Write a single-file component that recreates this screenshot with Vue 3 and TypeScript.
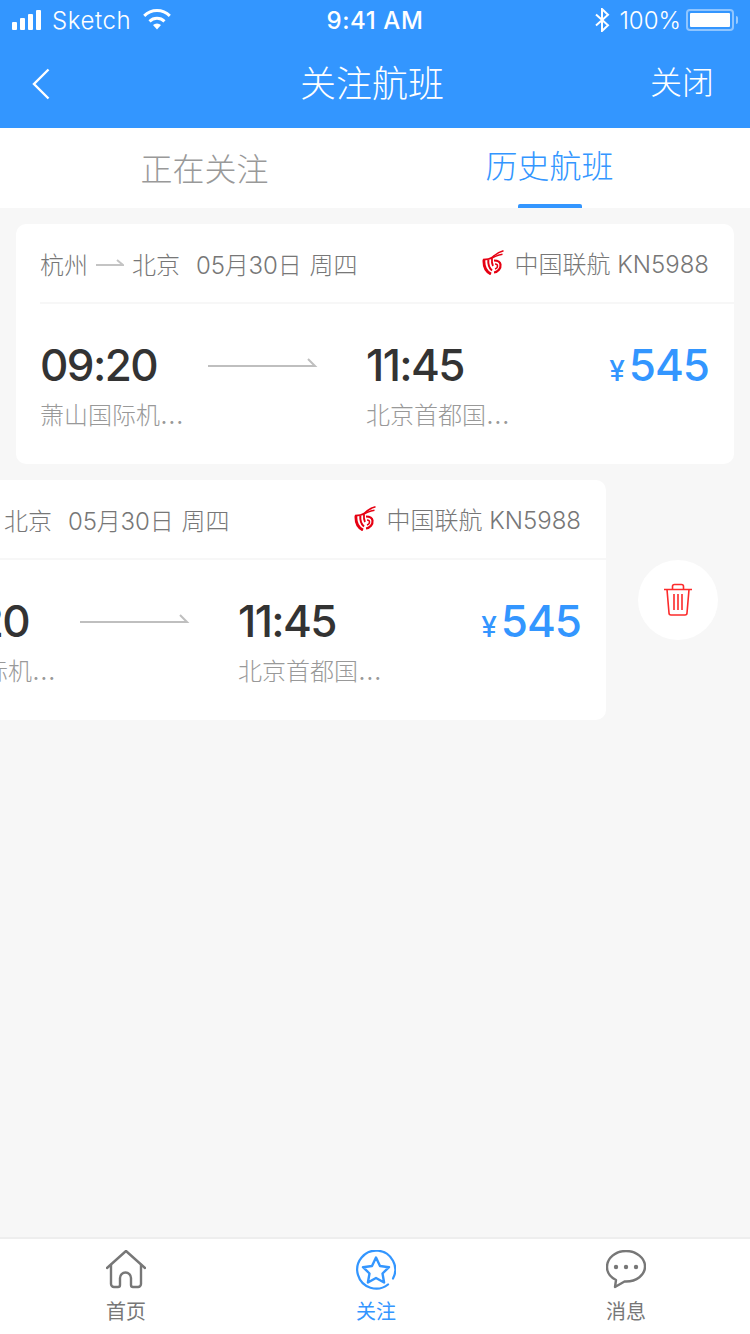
<template>
  <div class="page">
    <header class="top">
      <div class="status">
        <div class="status-side">
          <span class="signal"><i v-for="h in [8, 12, 16, 20]" :key="h" :style="{ height: h + 'px' }"></i></span>
          <span class="carrier sketch">Sketch</span>
          <svg class="wifi" width="30" height="22" viewBox="0 0 30 22">
            <path d="M15 20.5l-4-4.4a5.6 5.6 0 0 1 8 0z" fill="#fff" />
            <path d="M7.5 12.3a10.8 10.8 0 0 1 15 0M2.2 6.8a18.4 18.4 0 0 1 25.6 0" fill="none" stroke="#fff" stroke-width="3" />
          </svg>
        </div>
        <span class="clock">9:41 AM</span>
        <div class="status-side right">
          <svg width="16" height="24" viewBox="0 0 16 24">
            <path d="M2 6.5l12 10.8L8 23V1l6 5.8L2 17.5" fill="none" stroke="#fff" stroke-width="2" />
          </svg>
          <span class="carrier">100%</span>
          <span class="battery"><b></b></span>
          <span class="nub"></span>
        </div>
      </div>
      <nav class="navbar">
        <svg class="back" width="18" height="32" viewBox="0 0 18 32">
          <path d="M16.5 1.5L2 16l14.500 14.500" fill="none" stroke="#fff" stroke-width="2.400" />
        </svg>
        <h1>关注航班</h1>
        <span class="close">关闭</span>
      </nav>
    </header>

    <div class="tabs">
      <div class="tab">正在关注</div>
      <div class="tab active">历史航班</div>
    </div>

    <main class="list">
      <div v-for="(row, i) in rows" :key="i" class="row" :class="{ swiped: row.swiped }">
        <article class="card">
          <div class="card-head">
            <div class="route">
              <span>杭州</span>
              <svg width="28" height="10" viewBox="0 0 28 10">
                <path d="M0 7h27l-6-5" fill="none" stroke="#c4c4c4" stroke-width="2" />
              </svg>
              <span>北京</span>
              <span class="date">05月30日</span>
              <span>周四</span>
            </div>
            <div class="airline">
              <svg class="logo" width="22" height="25" viewBox="0 0 22 25">
                <g fill="none" stroke="#e60012">
                  <path d="M2 9.500C1.500 16 3.500 21.500 9 24" stroke-width="2.800" />
                  <path d="M6.300 9.500C6 14 7 18 10 20.500" stroke-width="2" />
                  <path d="M10 8.500C9.700 11 10 14 11 16" stroke-width="1.800" />
                  <path d="M1 9.500C5 9.500 8 9 10 7.500 13 4.500 17 2 21.500 .8" stroke-width="1.600" />
                  <path d="M9 9C12 6.500 16 5 20.500 4.200" stroke-width="1.400" />
                  <path d="M12 10.500c3 0 6 .5 6.500 4 .5 4-2.500 7.500-6.500 8" stroke-width="2.200" />
                  <path d="M13 14c1.500 0 2.500 .7 2.500 2 0 1.500-1 2.500-2.500 3" stroke-width="1.500" />
                </g>
              </svg>
              <span>中国联航 KN5988</span>
            </div>
          </div>
          <div class="card-body">
            <div class="stop">
              <div class="time">09:20</div>
              <div class="airport">萧山国际机<span class="dots">…</span></div>
            </div>
            <svg class="arrow" width="110" height="12" viewBox="0 0 110 12">
              <path d="M0 9h107l-7-7" fill="none" stroke="#bfbfbf" stroke-width="2" />
            </svg>
            <div class="stop">
              <div class="time">11:45</div>
              <div class="airport">北京首都国<span class="dots">…</span></div>
            </div>
            <div class="price"><small>¥</small>545</div>
          </div>
        </article>
        <button v-if="row.swiped" class="delete" type="button" aria-label="删除">
          <svg width="30" height="34" viewBox="0 0 30 34" fill="none" stroke="#fc2b2b" stroke-width="1.600">
            <path d="M1 6.500h28M9.500 6.500V3.500a2 2 0 0 1 2-2h7a2 2 0 0 1 2 2v3" />
            <path d="M4 6.500l2 23.500a2 2 0 0 0 2 2h14a2 2 0 0 0 2-2l2-23.500" />
            <path d="M11 11v16M15 11v16M19 11v16" />
          </svg>
        </button>
      </div>
    </main>

    <footer class="tabbar">
      <div class="tabbar-item">
        <svg width="40" height="40" viewBox="0 0 40 40" fill="none" stroke="#777" stroke-width="2.400" stroke-linejoin="round" stroke-linecap="round">
          <path d="M1 18L20 1l19 17" />
          <path d="M5 15v19a3 3 0 0 0 3 3h4a2 2 0 0 0 2-2v-7a5.500 5.500 0 0 1 11 0v7a2 2 0 0 0 2 2h5a3 3 0 0 0 3-3V15" />
        </svg>
        <span>首页</span>
      </div>
      <div class="tabbar-item on">
        <svg width="40" height="40" viewBox="0 0 40 40" fill="none" stroke="#3396ff" stroke-width="2.200" stroke-linejoin="round">
          <path d="M32 34.500A19 19 0 1 1 37 28.500" stroke-linecap="round" />
          <path d="M20 7.500l4 8.500 9 1.200-6.500 6.300 1.600 9L20 28l-8.100 4.500 1.600-9L7 17.200l9-1.200z" stroke-width="2.400" />
        </svg>
        <span>关注</span>
      </div>
      <div class="tabbar-item">
        <svg width="40" height="40" viewBox="0 0 40 40" fill="none" stroke="#777" stroke-width="2.400" stroke-linejoin="round">
          <path d="M20 1C9.500 1 1 8 1 17c0 5.500 3 10 9 13l-1 7 9.500-5.500H20c10.500 0 19-6.500 19-15S30.500 1 20 1z" />
          <circle cx="10" cy="17" r="2.200" fill="#777" stroke="none" />
          <circle cx="20" cy="17" r="2.200" fill="#777" stroke="none" />
          <circle cx="30" cy="17" r="2.200" fill="#777" stroke="none" />
        </svg>
        <span>消息</span>
      </div>
    </footer>
  </div>
</template>

<script setup lang="ts">
const rows = [{ swiped: false }, { swiped: true }]
</script>

<style>
html,
body {
  margin: 0;
  background: #f7f7f7;
}
</style>

<style scoped>
.page {
  width: 750px;
  height: 1334px;
  display: flex;
  flex-direction: column;
  overflow: hidden;
  background: #f7f7f7;
  font-family: Inter, "Noto Sans CJK SC", sans-serif;
}

.top {
  height: 128px;
  background: #3396ff;
  color: #fff;
}

.status {
  height: 40px;
  display: flex;
  align-items: center;
  justify-content: space-between;
  padding: 0 12px;
}

.status-side {
  width: 200px;
  display: flex;
  align-items: center;
  gap: 9px;
}

.status-side.right {
  justify-content: flex-end;
  gap: 9px;
}

.signal {
  display: flex;
  align-items: flex-end;
  gap: 3px;
  margin-right: 2px;
}

.signal i {
  width: 5px;
  border-radius: 1px;
  background: #fff;
}

.carrier {
  font-size: 24px;
  font-weight: 300;
}

.sketch {
  letter-spacing: 0.6px;
}

.wifi {
  margin-left: 2px;
}

.clock {
  font-size: 24px;
  font-weight: 500;
  letter-spacing: 0.6px;
}

.battery {
  width: 48px;
  height: 22px;
  box-sizing: border-box;
  border: 2px solid rgba(255, 255, 255, 0.45);
  border-radius: 4px;
  padding: 2px;
  margin: 0 -7px 0 -4px;
}

.battery b {
  display: block;
  height: 100%;
  border-radius: 1px;
  background: #fff;
}

.nub {
  width: 2px;
  height: 8px;
  border-radius: 0 2px 2px 0;
  background: rgba(255, 255, 255, 0.5);
}

.navbar {
  height: 88px;
  display: flex;
  align-items: center;
  justify-content: space-between;
  padding: 0 36px 0 32px;
  position: relative;
}

.navbar h1 {
  position: absolute;
  left: 0;
  right: 6px;
  top: 0;
  margin: 0;
  line-height: 88px;
  font-size: 36px;
  font-weight: 300;
  text-align: center;
}

.close {
  font-size: 32px;
  font-weight: 300;
  margin-top: -8px;
}

.tabs {
  height: 80px;
  display: grid;
  grid-template-columns: 345px 345px;
  grid-template-rows: 80px;
  padding-left: 32px;
  background: #fff;
}

.tab {
  text-align: center;
  font-size: 32px;
  font-weight: 300;
  line-height: 84px;
  color: #999;
  position: relative;
}

.tab.active {
  color: #3396ff;
  line-height: 78px;
}

.tab.active::after {
  content: "";
  position: absolute;
  left: 141px;
  bottom: 0;
  width: 64px;
  height: 4px;
  border-radius: 2px 2px 0 0;
  background: #3396ff;
}

.list {
  flex: 1;
  padding: 16px 0 0 16px;
  display: flex;
  flex-direction: column;
  gap: 16px;
}

.row {
  display: flex;
  align-items: center;
  gap: 32px;
}

.row.swiped {
  margin-left: -128px;
}

.card {
  flex: none;
  width: 718px;
  height: 240px;
  border-radius: 10px;
  background: #fff;
}

.card-head {
  height: 78px;
  margin-left: 24px;
  padding-right: 25px;
  border-bottom: 2px solid #f7f7f7;
  display: flex;
  align-items: center;
  justify-content: space-between;
  font-size: 24px;
  font-weight: 300;
  color: #777;
}

.route {
  display: flex;
  align-items: center;
  gap: 8px;
}

.date {
  margin-left: 8px;
  letter-spacing: -0.15px;
}

.airline {
  display: flex;
  align-items: center;
  gap: 10px;
  margin-top: -2px;
}

.card-body {
  display: flex;
  padding: 35px 25px 0 24px;
  height: 160px;
  box-sizing: border-box;
}

.stop {
  width: 168px;
}

.time {
  font-size: 44px;
  line-height: 52px;
  font-weight: 500;
  color: #333;
  letter-spacing: -1.6px;
}

.airport {
  margin-top: 8px;
  height: 34px;
  font-size: 24px;
  line-height: 34px;
  font-weight: 300;
  color: #999;
}

.dots {
  font-size: 28px;
  line-height: 0;
}

.arrow {
  flex: none;
  margin: 18px 48px 0 0;
}

.price {
  margin-left: auto;
  font-size: 44px;
  line-height: 52px;
  font-weight: 500;
  letter-spacing: -1px;
  color: #3396ff;
}

.price small {
  font-size: 28px;
  margin-right: 5px;
}

.delete {
  flex: none;
  width: 80px;
  height: 80px;
  padding: 0;
  border: 0;
  border-radius: 50%;
  background: #fff;
  display: flex;
  align-items: center;
  justify-content: center;
}

.tabbar {
  height: 97px;
  box-sizing: border-box;
  border-top: 2px solid #eee;
  background: #fff;
  display: grid;
  grid-template-columns: repeat(3, 250px);
  padding-left: 1px;
}

.tabbar-item {
  display: flex;
  flex-direction: column;
  align-items: center;
  padding-top: 11px;
  font-size: 20px;
  line-height: 28px;
  color: #777;
}

.tabbar-item span {
  margin-top: 8px;
}

.tabbar-item.on {
  color: #3396ff;
}
</style>
